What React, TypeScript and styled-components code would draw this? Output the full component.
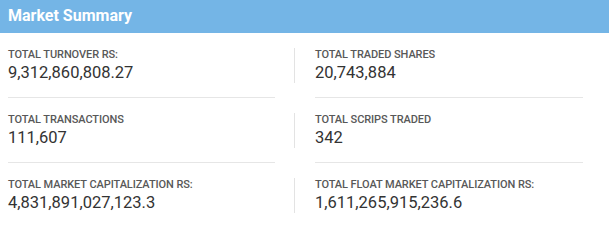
import React from 'react';
import styled, { createGlobalStyle } from 'styled-components';

const GlobalStyle = createGlobalStyle`
    body {
        margin: 0;
        background: #ffffff;
        font-family: Roboto, 'Noto Sans', sans-serif;
    }
`;

interface Stat {
    label: string;
    value: string;
}

const rows: Stat[][] = [
    [
        { label: 'Total Turnover Rs:', value: '9,312,860,808.27' },
        { label: 'Total Traded Shares', value: '20,743,884' },
    ],
    [
        { label: 'Total Transactions', value: '111,607' },
        { label: 'Total Scrips Traded', value: '342' },
    ],
    [
        { label: 'Total Market Capitalization Rs:', value: '4,831,891,027,123.3' },
        { label: 'Total Float Market Capitalization Rs:', value: '1,611,265,915,236.6' },
    ],
];

const Panel = styled.section`
    width: 609px;
    height: 244px;
    background: #ffffff;
`;

const PanelHeader = styled.h2`
    box-sizing: border-box;
    height: 33px;
    margin: 0;
    padding: 0 8px;
    background: #74b5e6;
    color: #ffffff;
    font-size: 16px;
    font-weight: 700;
    line-height: 32px;
`;

const PanelBody = styled.div`
    padding-top: 15px;
`;

const Row = styled.div`
    display: grid;
    grid-template-columns: 294px 1fr;
    margin-bottom: 15px;

    &:last-child {
        margin-bottom: 0;
    }
`;

const Cell = styled.div<{ $right?: boolean }>`
    padding: ${props => (props.$right ? '0 26px 0 0' : '0 19px 0 8px')};
`;

const StatBlock = styled.div<{ $right?: boolean }>`
    height: 35px;
    border-left: ${props => (props.$right ? '1px solid #e3e3e3' : 'none')};
    padding-left: ${props => (props.$right ? '20px' : '0')};
`;

const Label = styled.div`
    color: #585858;
    font-size: 11px;
    font-weight: 500;
    letter-spacing: -0.08px;
    line-height: 14px;
    text-transform: uppercase;
    white-space: nowrap;
`;

const Value = styled.div`
    color: #333333;
    font-size: 16.5px;
    line-height: 21px;
    white-space: nowrap;
`;

const Divider = styled.hr<{ $right?: boolean; $hidden?: boolean }>`
    height: 1px;
    margin: 14px 0 0 ${props => (props.$right ? '21px' : '0')};
    border: 0;
    background: ${props => (props.$hidden ? 'transparent' : '#e6e6e6')};
`;

const App = () => {
    return (
        <Panel>
            <GlobalStyle />
            <PanelHeader>Market Summary</PanelHeader>
            <PanelBody>
                {rows.map((row, i) => (
                    <Row key={i}>
                        {row.map((stat, j) => (
                            <Cell key={stat.label} $right={j === 1}>
                                <StatBlock $right={j === 1}>
                                    <Label>{stat.label}</Label>
                                    <Value>{stat.value}</Value>
                                </StatBlock>
                                <Divider $right={j === 1} $hidden={i === rows.length - 1} />
                            </Cell>
                        ))}
                    </Row>
                ))}
            </PanelBody>
        </Panel>
    );
};

export default App;
